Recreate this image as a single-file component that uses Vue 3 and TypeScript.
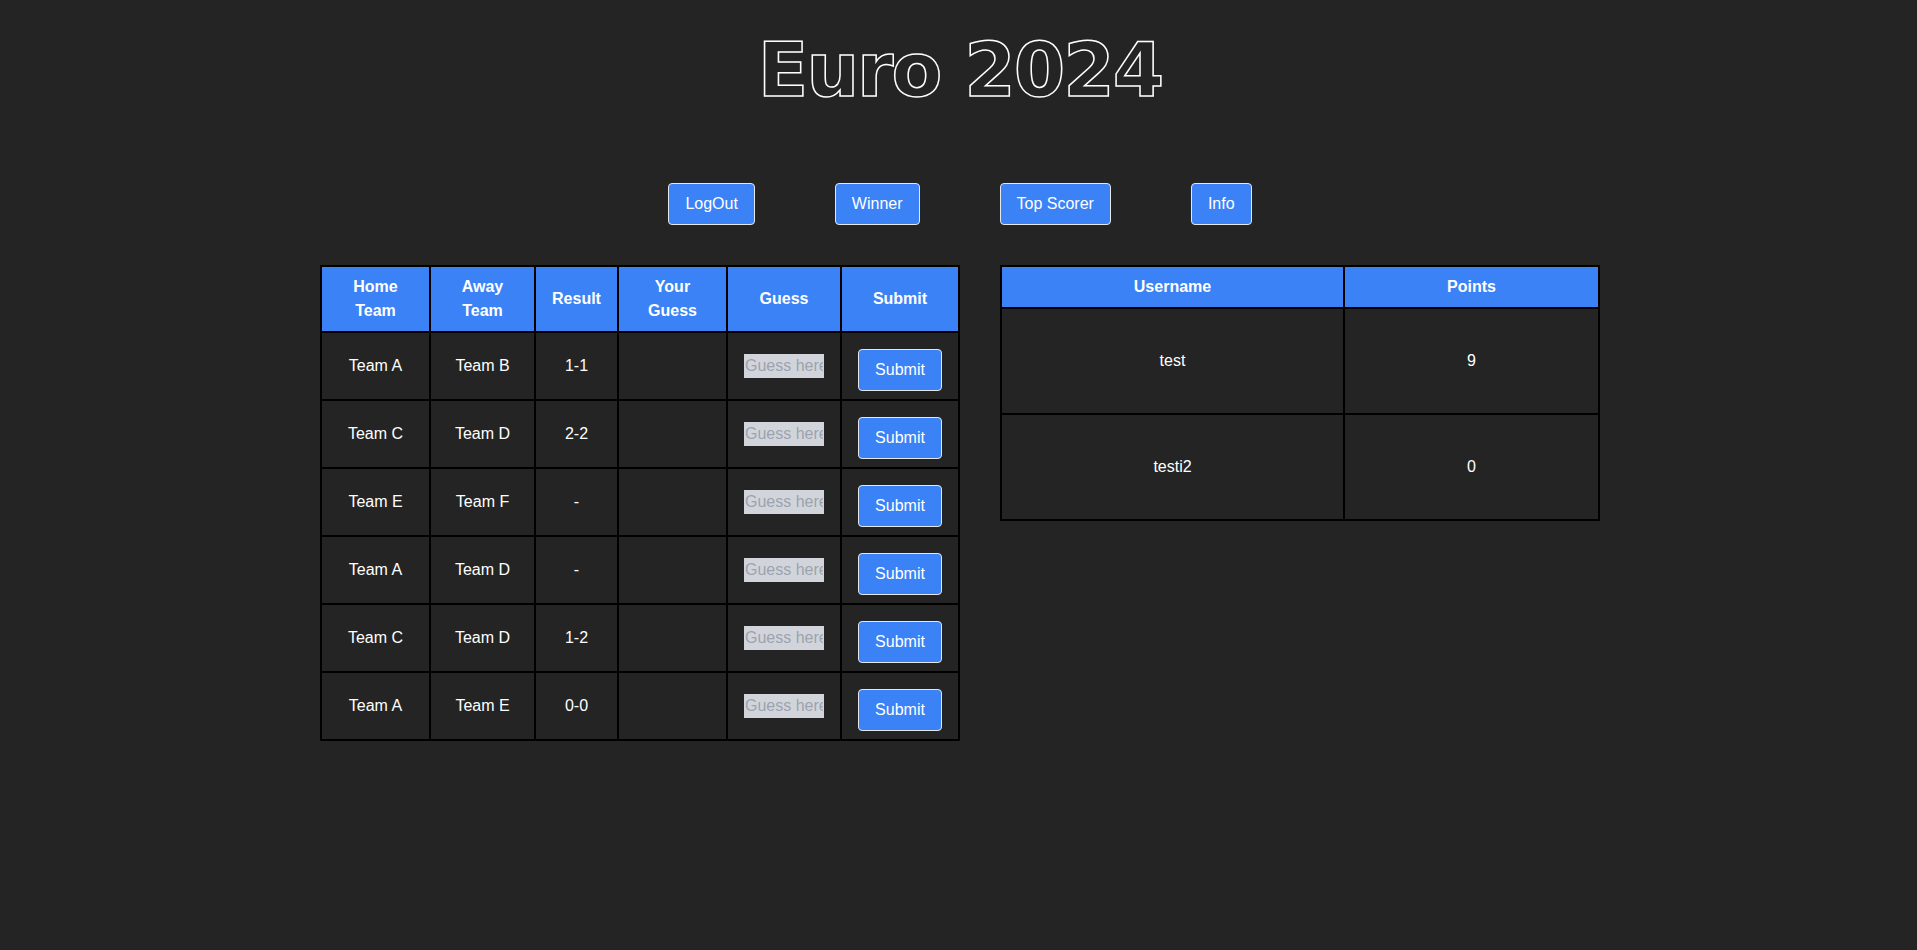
<template>
  <div class="page">
    <h1 class="title">Euro 2024</h1>
    <nav class="nav">
      <button v-for="item in navItems" :key="item" class="btn">{{ item }}</button>
    </nav>
    <div class="tables">
      <table class="grid games">
        <colgroup>
          <col v-for="(w, i) in gameCols" :key="i" :style="{ width: w + 'px' }" />
        </colgroup>
        <thead>
          <tr>
            <th>Home<br />Team</th>
            <th>Away<br />Team</th>
            <th>Result</th>
            <th>Your<br />Guess</th>
            <th>Guess</th>
            <th>Submit</th>
          </tr>
        </thead>
        <tbody>
          <tr v-for="(game, i) in games" :key="i">
            <td>{{ game.home }}</td>
            <td>{{ game.away }}</td>
            <td>{{ game.result }}</td>
            <td></td>
            <td><input class="guess" type="text" placeholder="Guess here" /></td>
            <td><button class="btn submit">Submit</button></td>
          </tr>
        </tbody>
      </table>
      <table class="grid scores">
        <colgroup>
          <col class="col-name" />
          <col class="col-points" />
        </colgroup>
        <thead>
          <tr>
            <th>Username</th>
            <th>Points</th>
          </tr>
        </thead>
        <tbody>
          <tr v-for="row in scores" :key="row.name">
            <td>{{ row.name }}</td>
            <td>{{ row.points }}</td>
          </tr>
        </tbody>
      </table>
    </div>
  </div>
</template>

<script setup lang="ts">
const navItems = ["LogOut", "Winner", "Top Scorer", "Info"];

const gameCols = [109, 105, 83, 109, 114, 118];

const games = [
  { home: "Team A", away: "Team B", result: "1-1" },
  { home: "Team C", away: "Team D", result: "2-2" },
  { home: "Team E", away: "Team F", result: "-" },
  { home: "Team A", away: "Team D", result: "-" },
  { home: "Team C", away: "Team D", result: "1-2" },
  { home: "Team A", away: "Team E", result: "0-0" },
];

const scores = [
  { name: "test", points: 9 },
  { name: "testi2", points: 0 },
];
</script>

<style>
html,
body {
  margin: 0;
  background: #242424;
}
</style>

<style scoped>
.page {
  box-sizing: border-box;
  min-height: 950px;
  padding-left: 3px;
  background: #242424;
  color: #fff;
  font-family: "Liberation Sans", Arial, sans-serif;
  font-size: 16px;
  line-height: 24px;
}

.title {
  margin: 0;
  height: 183px;
  padding-top: 28px;
  box-sizing: border-box;
  text-align: center;
  font-family: "DejaVu Sans", sans-serif;
  font-size: 74px;
  line-height: 84px;
  font-weight: 700;
  letter-spacing: -2px;
  color: #242424;
  -webkit-text-stroke: 1.5px #fff;
}

.nav {
  display: flex;
  justify-content: center;
  gap: 80px;
}

.btn {
  box-sizing: border-box;
  height: 42px;
  padding: 8px 16px;
  border: 1px solid #e5e7eb;
  border-radius: 4px;
  background: #3b82f6;
  color: #fff;
  font: inherit;
}

.tables {
  display: flex;
  justify-content: center;
  gap: 40px;
  margin-top: 40px;
  align-items: flex-start;
}

.grid {
  border-collapse: collapse;
  table-layout: fixed;
  border: 2px solid #000;
  text-align: center;
}

.games {
  width: 640px;
}

.scores {
  width: 600px;
}

.col-name {
  width: 343px;
}

.col-points {
  width: 255px;
}

.grid th,
.grid td {
  border: 2px solid #000;
  padding: 8px;
}

.grid th {
  background: #3b82f6;
  font-weight: 700;
}

.scores td {
  height: 106px;
  box-sizing: border-box;
}

.guess {
  box-sizing: border-box;
  width: 80px;
  height: 24px;
  padding: 0 1px;
  border: 0;
  background: #d1d5db;
  color: #000;
  font: inherit;
  vertical-align: middle;
}

.guess::placeholder {
  color: #9ca3af;
  opacity: 1;
}

.submit {
  margin-top: 8px;
  display: inline-block;
  vertical-align: top;
}
</style>
